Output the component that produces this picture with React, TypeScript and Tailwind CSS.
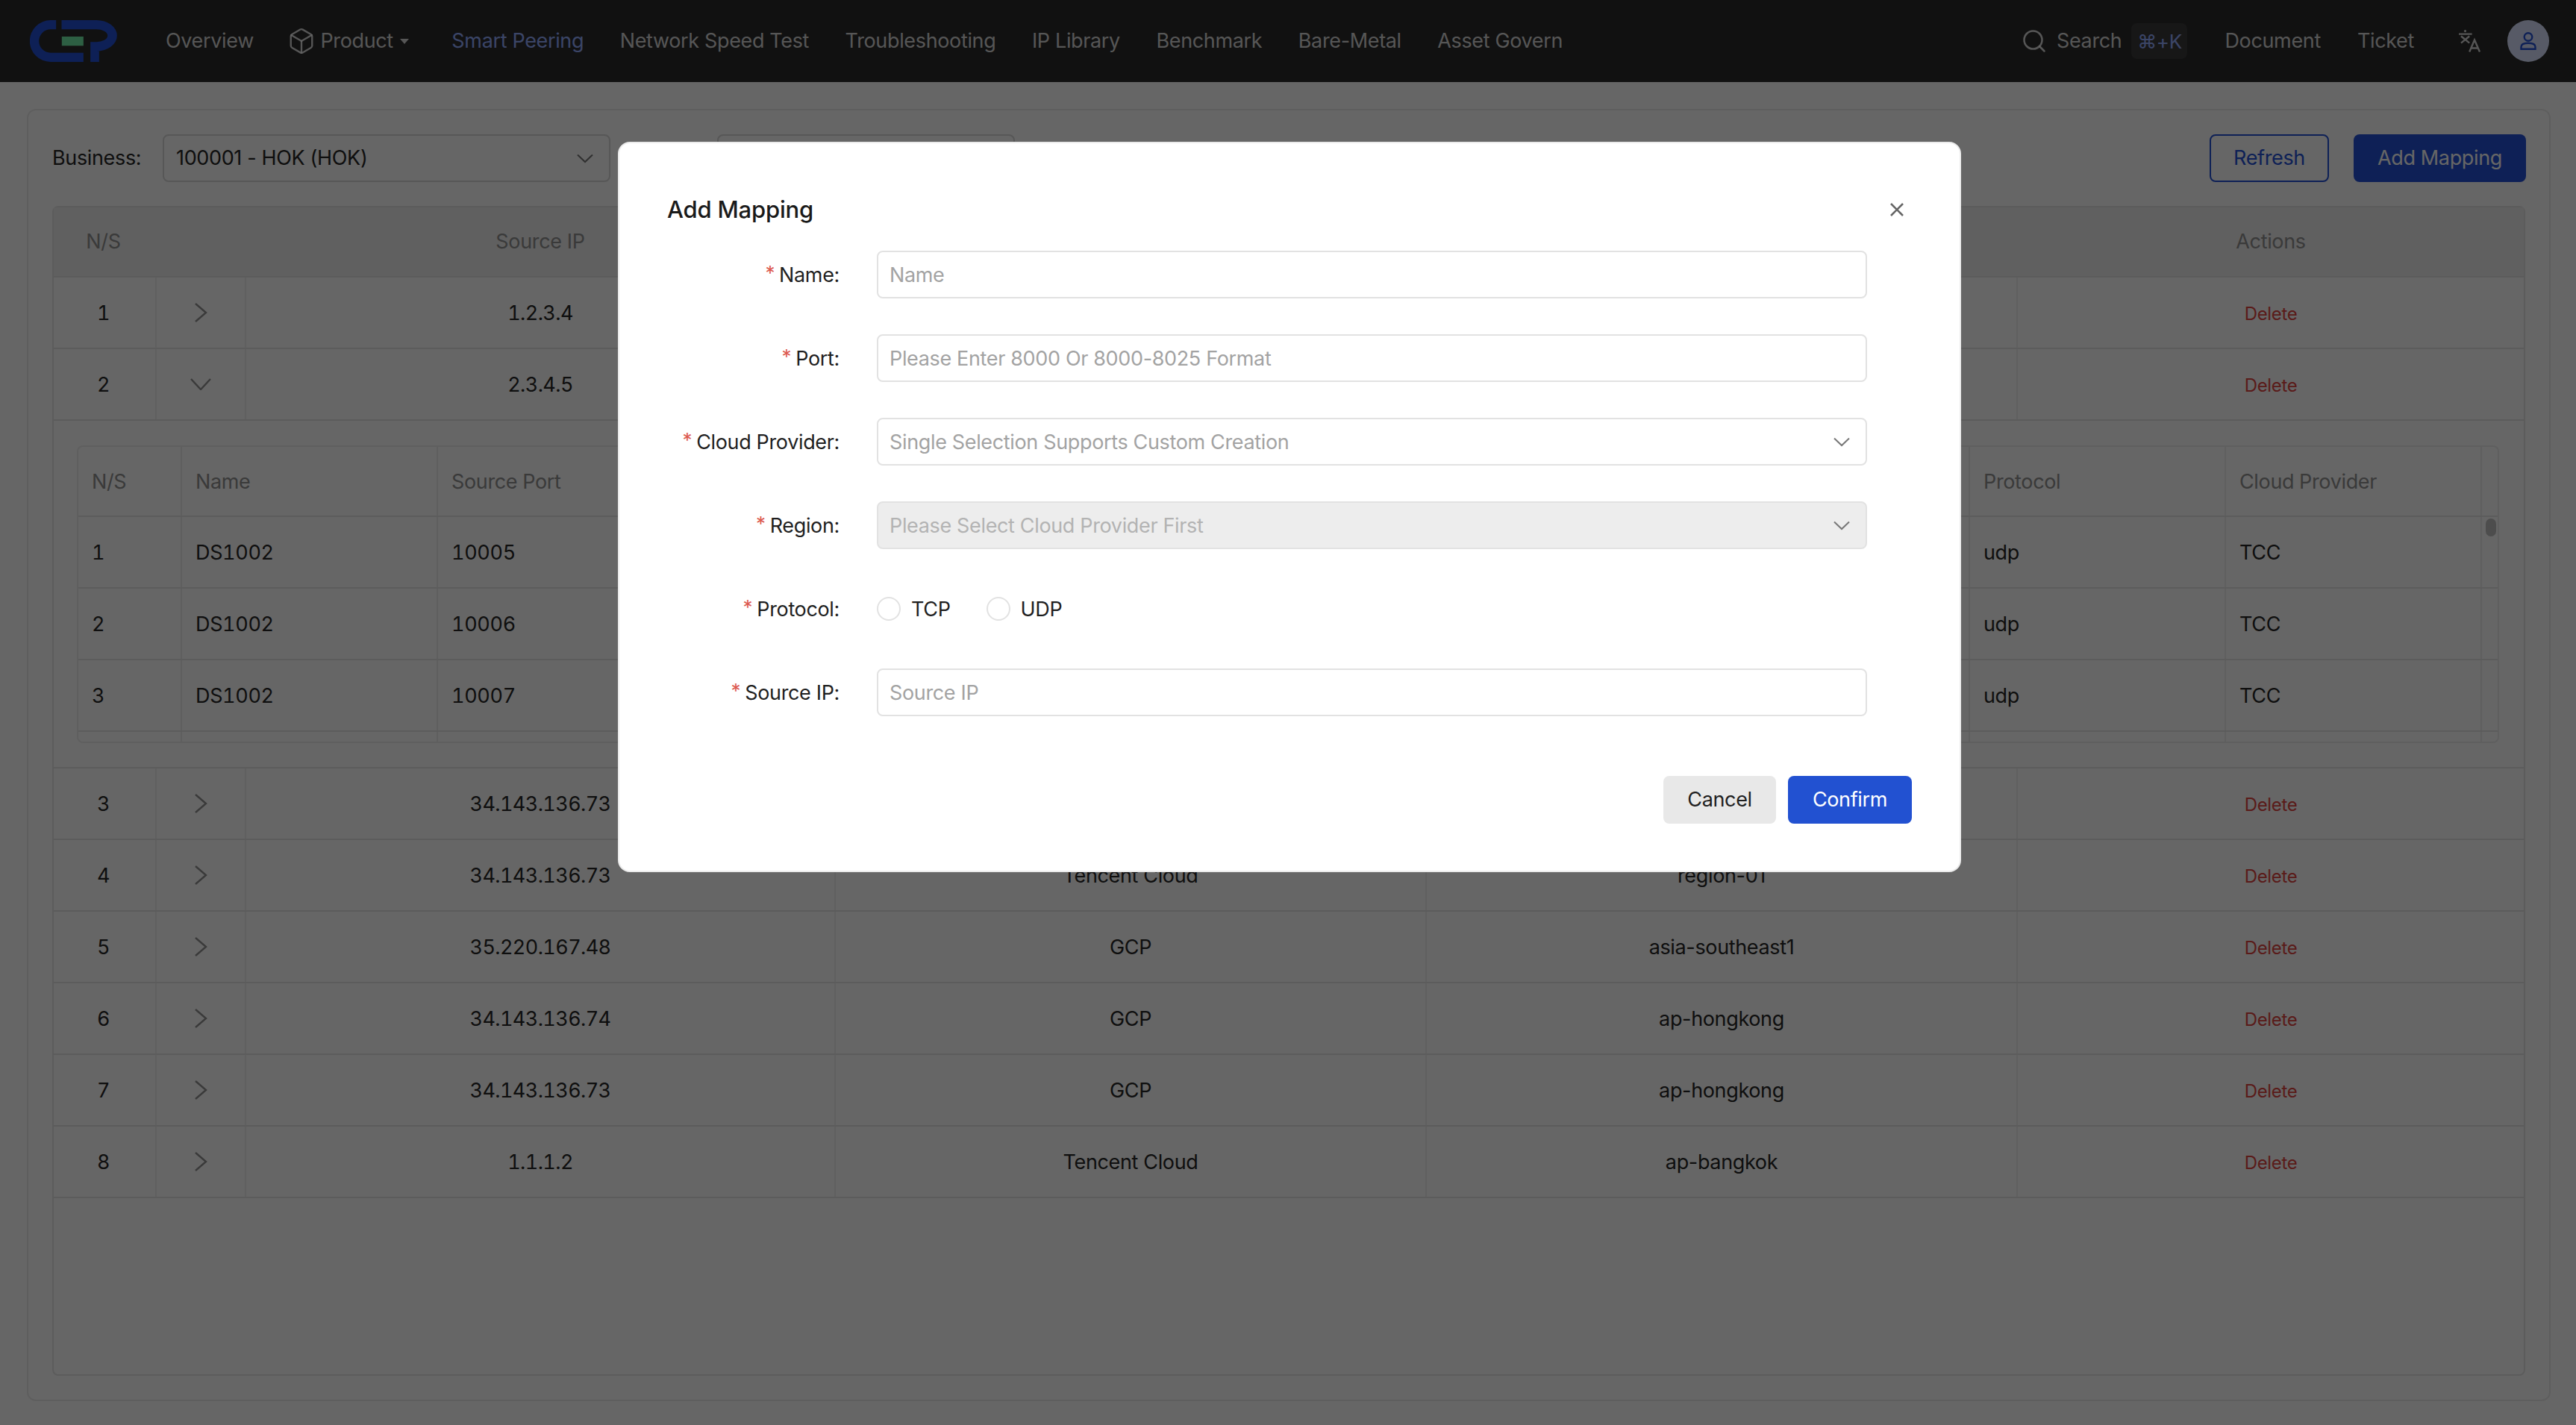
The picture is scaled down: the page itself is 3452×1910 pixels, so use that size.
import { Box, Search } from "lucide-react"

const font = { fontFamily: 'Inter, "Liberation Sans", sans-serif' }

const mainCols = "grid grid-cols-[138px_120px_790px_792px_792px_1fr]"
const subCols = "grid grid-cols-[139px_343px_343px_342px_342px_342px_342px_342px_343px_343px_1fr]"

const rows = [
    { id: 3, ip: "34.143.136.73", cloud: "", region: "" },
    { id: 4, ip: "34.143.136.73", cloud: "Tencent Cloud", region: "region-01" },
    { id: 5, ip: "35.220.167.48", cloud: "GCP", region: "asia-southeast1" },
    { id: 6, ip: "34.143.136.74", cloud: "GCP", region: "ap-hongkong" },
    { id: 7, ip: "34.143.136.73", cloud: "GCP", region: "ap-hongkong" },
    { id: 8, ip: "1.1.1.2", cloud: "Tencent Cloud", region: "ap-bangkok" },
]

const Logo = () => (
    <svg width="117" height="56" viewBox="60 47 350 168">
        <path d="M165 47H143A84 84 0 0 0 143 215H275V178H143A47 47 0 0 1 143 84H165Z" fill="#2452d6" />
        <path d="M187 47H327A83 62.5 0 0 1 327 172H338V215H303V135H327A45 25.5 0 0 0 327 84H187Z" fill="#2452d6" />
        <rect x="188" y="113" width="87" height="37" fill="#70eda8" />
    </svg>
)

const TranslateIcon = () => (
    <svg width="30" height="30" viewBox="0 0 30 30" fill="none" stroke="#ffffffd0" strokeWidth="2.4">
        <circle cx="8.5" cy="1.6" r="1.6" fill="#ffffffd0" stroke="none" />
        <path d="M0 5.6H17.6M3 8.5L14.2 17.6M14.2 8.5L3 17.6M14.2 29.5L21 13.5L28 29.5M16.5 24.5H25.7" />
    </svg>
)

const SelectChevron = () => (
    <svg width="22" height="13" viewBox="0 0 22 13" fill="none" stroke="#777777" strokeWidth="2">
        <path d="M1 1.5L11 11L21 1.5" />
    </svg>
)

const Chevron = ({ open }: { open?: boolean }) =>
    open ? (
        <svg width="28" height="16" viewBox="0 0 28 16" fill="none" stroke="#919191" strokeWidth="2.4">
            <path d="M1 1L14 15L27 1" />
        </svg>
    ) : (
        <svg width="18" height="26" viewBox="0 0 18 26" fill="none" stroke="#919191" strokeWidth="2.4">
            <path d="M2 1L16 13L2 25" />
        </svg>
    )

const Cell = ({ children, last, first }: { children?: React.ReactNode; last?: boolean; first?: boolean }) => (
    <div className={`flex items-center justify-center ${first ? "pr-[3px]" : ""} ${last ? "" : "border-r-2 border-[#f0f0f0]"}`}>{children}</div>
)

const MainRow = ({ id, ip, cloud, region, open }: { id: number; ip: string; cloud: string; region: string; open?: boolean }) => (
    <div className={`${mainCols} h-[96px] border-b-2 border-[#e6e6e6] text-[#262626]`}>
        <Cell first><span className="pt-[2px] tabular-nums">{id}</span></Cell>
        <Cell><Chevron open={open} /></Cell>
        <Cell><span className="pt-[2px] tabular-nums tracking-[-0.6px]">{ip}</span></Cell>
        <Cell><span className="pt-[2px]">{cloud}</span></Cell>
        <Cell><span className="pt-[2px]">{region}</span></Cell>
        <Cell last><span className="pt-[3px] text-[24px] text-[#e0453f]">Delete</span></Cell>
    </div>
)

const SubCell = ({ children, head }: { children?: React.ReactNode; head?: boolean }) => (
    <div className={`flex items-center pl-[18px] pt-[2px] border-r-2 border-[#eeeeee] tabular-nums ${head ? "text-[#919191]" : ""}`}>{children}</div>
)

const subData = [
    { id: 1, port: "10005" },
    { id: 2, port: "10006" },
    { id: 3, port: "10007" },
]

const SubTable = () => (
    <div className="h-[466px] border-b-2 border-[#e6e6e6] pt-[33px] pl-[31px] pr-[33px]">
        <div className="relative h-[399px] overflow-hidden rounded-[8px] border-2 border-[#eeeeee] text-[#262626]">
            <div className={`${subCols} h-[94px] border-b-2 border-[#e6e6e6]`}>
                <SubCell head>N/S</SubCell>
                <SubCell head>Name</SubCell>
                <SubCell head>Source Port</SubCell>
                <SubCell /><SubCell /><SubCell /><SubCell /><SubCell />
                <SubCell head>Protocol</SubCell>
                <SubCell head>Cloud Provider</SubCell>
            </div>
            {subData.map((r) => (
                <div key={r.id} className={`${subCols} h-[96px] border-b-2 border-[#e6e6e6]`}>
                    <SubCell>{r.id}</SubCell>
                    <SubCell>DS1002</SubCell>
                    <SubCell>{r.port}</SubCell>
                    <SubCell /><SubCell /><SubCell /><SubCell /><SubCell />
                    <SubCell>udp</SubCell>
                    <SubCell>TCC</SubCell>
                </div>
            ))}
            <div className={`${subCols} h-[20px]`}>
                <SubCell /><SubCell /><SubCell /><SubCell /><SubCell /><SubCell /><SubCell /><SubCell /><SubCell /><SubCell />
            </div>
            <div className="absolute right-[2px] top-[96px] h-[24px] w-[14px] rounded-full bg-[#c0c0c0]" />
        </div>
    </div>
)

const Label = ({ text }: { text: string }) => (
    <label className="flex w-[231px] shrink-0 items-center justify-end gap-[6px] pt-[2px] text-[#1f1f1f]">
        <span className="mt-[-6px] text-[26px] leading-none text-[#dc5a50]">*</span>
        {text}:
    </label>
)

const FormRow = ({ label, children }: { label: string; children: React.ReactNode }) => (
    <div className="flex h-[64px] items-center gap-[50px]">
        <Label text={label} />
        <div className="flex-1">{children}</div>
    </div>
)

const Field = ({ text, select, disabled }: { text: string; select?: boolean; disabled?: boolean }) => (
    <div className={`flex h-[64px] items-center justify-between rounded-[8px] border-2 border-[#e2e2e2] pl-[15px] pr-[21px] ${disabled ? "bg-[#ededed] text-[#b3b3b3]" : "bg-white text-[#a3a3a3]"}`}>
        <span className="pt-[2px]">{text}</span>
        {select && <SelectChevron />}
    </div>
)

const Radio = ({ text }: { text: string }) => (
    <label className="flex items-center gap-[14px] text-[#1f1f1f]">
        <span className="h-[32px] w-[32px] rounded-full border-2 border-[#e2e2e2]" />
        <span className="pt-[2px]">{text}</span>
    </label>
)

const App = () => {
    return (
        <div className="relative flex h-[1910px] flex-col overflow-hidden bg-white text-[27px] tracking-[-0.35px]" style={font}>
            <header className="flex h-[110px] shrink-0 items-center justify-between bg-[#2b2b2b] pl-[40px] pr-[36px] text-[#ffffffd0]">
                <div className="flex items-center">
                    <Logo />
                    <nav className="ml-[65px] flex items-center gap-[48.5px]">
                        <a>Overview</a>
                        <a className="flex items-center pr-[9px]">
                            <Box size={38} strokeWidth={1.5} className="ml-[-3px] mr-[6px]" />
                            Product
                            <span className="ml-[9px] h-0 w-0 border-x-[6px] border-t-[7px] border-x-transparent border-t-[#ffffffd0]" />
                        </a>
                        <a className="text-[#93acff]">Smart Peering</a>
                        <a>Network Speed Test</a>
                        <a>Troubleshooting</a>
                        <a>IP Library</a>
                        <a>Benchmark</a>
                        <a>Bare-Metal</a>
                        <a>Asset Govern</a>
                    </nav>
                </div>
                <div className="flex items-center">
                    <Search size={36} strokeWidth={1.7} />
                    <span className="ml-[12px]">Search</span>
                    <span className="ml-[13px] flex h-[48px] w-[75px] items-center justify-center rounded-[8px] bg-[#3b3b3b] text-[26px] text-[#93acff]">⌘+K</span>
                    <a className="ml-[50px]">Document</a>
                    <a className="ml-[49px]">Ticket</a>
                    <span className="ml-[60px] flex"><TranslateIcon /></span>
                    <span className="ml-[35px] flex h-[56px] w-[56px] items-center justify-center rounded-full bg-[#d9e2ff]">
                        <svg width="22" height="24" viewBox="0 0 22 24" fill="none" stroke="#2452d6" strokeWidth="2.4">
                            <circle cx="11" cy="6.5" r="5.3" />
                            <path d="M1.5 22.7V20C1.5 16.5 5 14.8 11 14.8C17 14.8 20.5 16.5 20.5 20V22.7Z" />
                        </svg>
                    </span>
                </div>
            </header>

            <main className="min-h-0 flex-1 pb-[32px] pl-[36px] pr-[34px] pt-[36px]">
                <div className="flex h-full flex-col gap-[32px] rounded-[12px] border-2 border-[#ececec] pl-[32px] pr-[32px] pt-[32px] pb-[32px]">
                    <div className="flex h-[64px] items-center justify-between">
                        <div className="flex items-center">
                            <span className="w-[148px] text-[#262626]">Business:</span>
                            <div className="flex h-[64px] w-[600px] items-center justify-between rounded-[8px] border-2 border-[#d9d9d9] pl-[16px] pr-[21px] text-[#262626]">
                                100001 - HOK (HOK)
                                <SelectChevron />
                            </div>
                            <div className="ml-[143px] h-[64px] w-[399px] rounded-[8px] border-2 border-[#d9d9d9]" />
                        </div>
                        <div className="mr-[-1px] flex items-center gap-[33px]">
                            <button className="h-[64px] w-[160px] rounded-[8px] border-2 border-[#2452d6] text-[#2452d6]">Refresh</button>
                            <button className="h-[64px] w-[231px] rounded-[8px] bg-[#2452d6] text-white">Add Mapping</button>
                        </div>
                    </div>

                    <div className="min-h-0 flex-1 rounded-[8px] border-2 border-[#e6e6e6]">
                        <div className={`${mainCols} h-[94px] border-b-2 border-[#e6e6e6] bg-[#f0f0f0] text-[#919191]`}>
                            <Cell first>N/S</Cell>
                            <Cell />
                            <Cell>Source IP</Cell>
                            <Cell />
                            <Cell />
                            <Cell last>Actions</Cell>
                        </div>
                        <MainRow id={1} ip="1.2.3.4" cloud="" region="" />
                        <MainRow id={2} ip="2.3.4.5" cloud="" region="" open />
                        <SubTable />
                        {rows.map((r) => (
                            <MainRow key={r.id} {...r} />
                        ))}
                    </div>
                </div>
            </main>

            <div className="absolute inset-0 bg-black/60" />

            <div className="absolute left-[828px] top-[190px] h-[979px] w-[1800px] rounded-[16px] border-2 border-[#ebebeb] bg-white pl-[64px] pr-[64px]">
                <div className="mb-[30px] mt-[64px] flex h-[50px] items-center justify-between pr-[11px]">
                    <h2 className="text-[31px] font-medium tracking-[-0.2px] text-[#1a1a1a]">Add Mapping</h2>
                    <svg width="18" height="18" viewBox="0 0 18 18" stroke="#666666" strokeWidth="2.6">
                        <path d="M1 1L17 17M17 1L1 17" />
                    </svg>
                </div>
                <div className="flex flex-col gap-[48px] pr-[60px]">
                    <FormRow label="Name"><Field text="Name" /></FormRow>
                    <FormRow label="Port"><Field text="Please Enter 8000 Or 8000-8025 Format" /></FormRow>
                    <FormRow label="Cloud Provider"><Field text="Single Selection Supports Custom Creation" select /></FormRow>
                    <FormRow label="Region"><Field text="Please Select Cloud Provider First" select disabled /></FormRow>
                    <FormRow label="Protocol">
                        <div className="flex items-center gap-[48px]">
                            <Radio text="TCP" />
                            <Radio text="UDP" />
                        </div>
                    </FormRow>
                    <FormRow label="Source IP"><Field text="Source IP" /></FormRow>
                </div>
                <div className="mt-[80px] flex justify-end gap-[16px]">
                    <button className="h-[64px] w-[151px] rounded-[8px] bg-[#e8e8e8] text-[#1f1f1f]">Cancel</button>
                    <button className="h-[64px] w-[166px] rounded-[8px] bg-[#2251d1] text-white">Confirm</button>
                </div>
            </div>
        </div>
    )
}

export default App
